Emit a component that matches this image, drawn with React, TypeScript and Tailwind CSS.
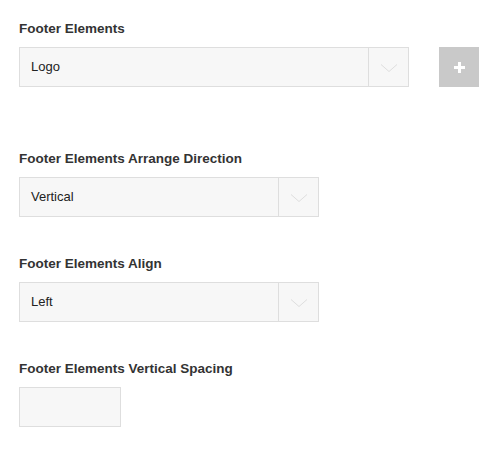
const labelCls =
  "block text-[13.5px] leading-[22px] font-bold text-[#333] mb-[7px] [font-family:'Liberation_Sans',Arial,sans-serif]";

function Chevron() {
  return (
    <svg width="18" height="10" viewBox="0 0 18 10" fill="none" stroke="#dedede" strokeWidth="1">
      <path d="M1 1.5 9 8.5 17 1.5" />
    </svg>
  );
}

function Select({ value, width }: { value: string; width: string }) {
  return (
    <div className={`flex h-10 ${width} border border-[#dedede] bg-[#f7f7f7]`}>
      <div className="flex flex-1 items-center pl-[11px] text-[13px] text-[#222]">{value}</div>
      <div className="flex w-10 items-center justify-center border-l border-[#dedede] pt-[2px]">
        <Chevron />
      </div>
    </div>
  );
}

export default function App() {
  return (
    <div className="min-h-[452px] w-[497px] bg-white pl-[19px] pt-[18px] [font-family:'Liberation_Sans',Arial,sans-serif]">
      <div className="mb-[61px]">
        <label className={labelCls}>Footer Elements</label>
        <div className="flex items-center">
          <Select value="Logo" width="w-[390px]" />
          <button className="ml-[30px] flex h-10 w-10 items-center justify-center bg-[#c9c9c9]">
            <svg width="11" height="11" viewBox="0 0 11 11" fill="#fff">
              <rect x="4" y="0" width="3" height="11" />
              <rect x="0" y="4" width="11" height="3" />
            </svg>
          </button>
        </div>
      </div>

      <div className="mb-9">
        <label className={labelCls}>Footer Elements Arrange Direction</label>
        <Select value="Vertical" width="w-[300px]" />
      </div>

      <div className="mb-9">
        <label className={labelCls}>Footer Elements Align</label>
        <Select value="Left" width="w-[300px]" />
      </div>

      <div>
        <label className={labelCls}>Footer Elements Vertical Spacing</label>
        <div className="h-10 w-[102px] border border-[#dedede] bg-[#f7f7f7]" />
      </div>
    </div>
  );
}
